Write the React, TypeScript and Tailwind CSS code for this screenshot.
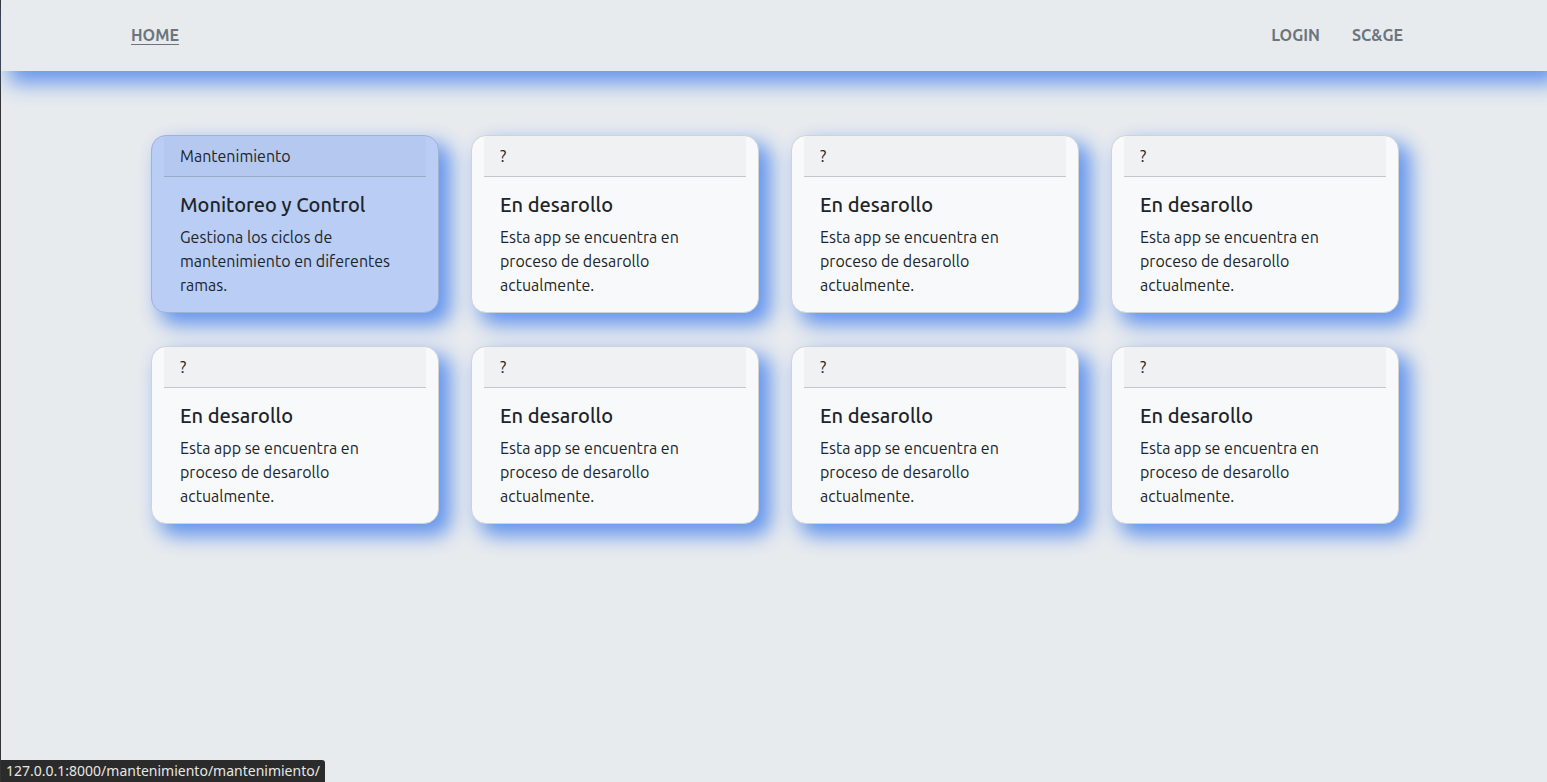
const cards = [
  {
    tag: 'Mantenimiento',
    title: 'Monitoreo y Control',
    text: 'Gestiona los ciclos de mantenimiento en diferentes ramas.',
    active: true,
  },
  ...Array.from({ length: 7 }, () => ({
    tag: '?',
    title: 'En desarollo',
    text: 'Esta app se encuentra en proceso de desarollo actualmente.',
    active: false,
  })),
];

function AppCard({ tag, title, text, active }: (typeof cards)[number]) {
  return (
    <a
      href="#"
      className={`block rounded-[15px] border shadow-[10px_10px_20px_2px_#6495ed] ${
        active ? 'bg-[#b9cdf5] border-[#9fb1d6]' : 'bg-[#f8f9fa] border-[#cfd2d6]'
      }`}
    >
      <div
        className={`mx-3 h-[41px] flex items-center px-4 text-[16px] border-b ${
          active ? 'bg-[#b5c8f0] border-[#9aa9c6]' : 'bg-[#f0f1f3] border-[#c4c6c9]'
        }`}
      >
        {tag}
      </div>
      <div className="px-7 pt-4 pb-[15px]">
        <h5 className="text-[20px] leading-[24px] mb-2 font-medium">{title}</h5>
        <p className="text-[16px] leading-[24px] w-[220px]">{text}</p>
      </div>
    </a>
  );
}

export default function App() {
  return (
    <div className="min-h-[782px] bg-[#e8ebee] border-l border-[#333] text-[#212529] font-['Ubuntu','Noto_Sans',sans-serif] relative">
      <nav className="h-[71px] bg-[#e8ebee] shadow-[10px_10px_20px_2px_#6495ed] relative z-10 flex items-center justify-between pl-[130px] pr-[144px] pb-[2px]">
        <a href="#" className="text-[16px] font-bold text-[#6c757d] underline underline-offset-[3px]">
          HOME
        </a>
        <div className="flex gap-8 text-[16px] font-bold text-[#6c757d]">
          <a href="#">LOGIN</a>
          <a href="#">SC&amp;GE</a>
        </div>
      </nav>
      <main className="pt-[64px] pl-[150px]">
        <div className="grid grid-cols-[repeat(4,288px)] gap-x-[32px] gap-y-[33px]">
          {cards.map((c, i) => (
            <AppCard key={i} {...c} />
          ))}
        </div>
      </main>
      <div className="absolute left-0 bottom-0 h-[22px] px-[5px] bg-[#2b2b2b] text-[#e6e6e6] text-[14px] leading-[22px] rounded-tr-[3px] font-['Noto_Sans',sans-serif]">
        127.0.0.1:8000/mantenimiento/mantenimiento/
      </div>
    </div>
  );
}
